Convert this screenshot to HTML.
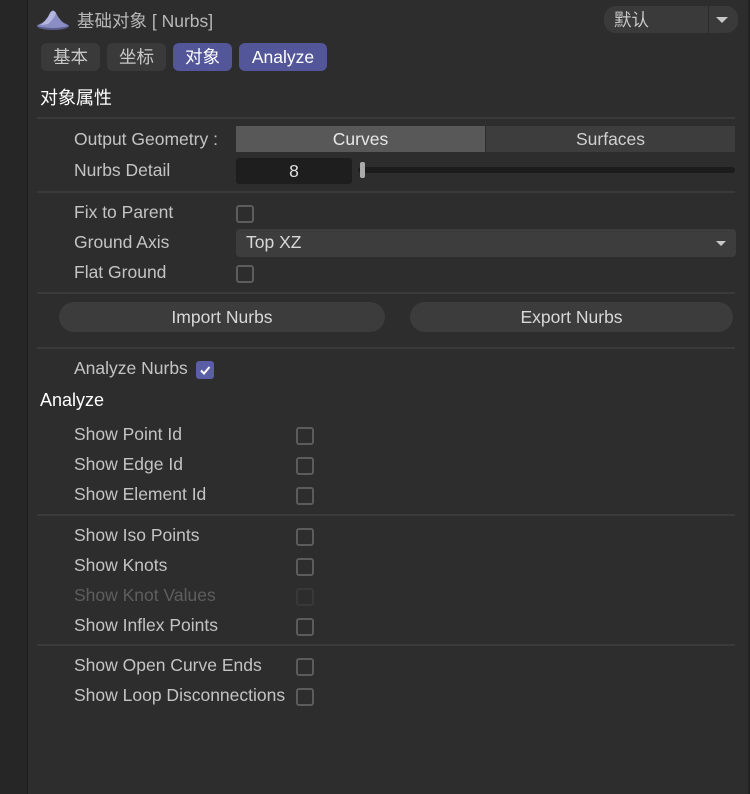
<!DOCTYPE html>
<html><head><meta charset="utf-8"><style>
body{margin:0;width:750px;height:794px;background:#2d2d2d;position:relative;overflow:hidden;font-family:"Liberation Sans","Noto Sans CJK SC",sans-serif;color:#c4c4c4;font-size:17.5px}
.a{position:absolute;white-space:nowrap}
.sep{position:absolute;left:37px;width:698px;height:2px;background:#3a3a3a}
.cb{position:absolute;width:14px;height:14px;border:2px solid #5c5c5c;border-radius:3px}
.tab{position:absolute;top:43px;height:28px;border-radius:6px;background:#3a3a3a;color:#c8c8c8;text-align:center;line-height:28px;font-size:17.5px}
.tab.on{background:#53579a;color:#fff}
.btn{position:absolute;top:302px;height:30px;border-radius:15px;background:#3c3c3c;color:#d8d8d8;text-align:center;line-height:30px}
</style></head><body>
<div class="a" style="left:0;top:0;width:27px;height:794px;background:#262626;border-right:1px solid #1c1c1c"></div>
<div class="a" style="left:748px;top:0;width:2px;height:794px;background:#222"></div>
<svg class="a" style="left:36px;top:9px" width="34" height="22" viewBox="0 0 34 22"><ellipse cx="17" cy="17" rx="16" ry="4" fill="#5a5c8a"/><path d="M1 17 Q10 13 14 4 Q17 -1 20 4 Q24 13 33 17 Q17 21 1 17Z" fill="#8a8cc4"/><path d="M14 4 Q17 0 20 4 Q18 10 12 15 Q8 16 4 16 Q11 12 14 4Z" fill="#b4b6e0"/></svg>
<div class="a" style="left:77px;top:8px;color:#b8b8b8">基础对象 [ Nurbs]</div>
<div class="a" style="left:604px;top:6px;width:134px;height:27px;border-radius:12px;background:#3a3a3a"></div>
<div class="a" style="left:708px;top:6px;width:1px;height:27px;background:#2a2a2a"></div>
<div class="a" style="left:614px;top:7px;color:#c8c8c8">默认</div>
<div class="a" style="left:716px;top:17px;width:0;height:0;border-left:6px solid transparent;border-right:6px solid transparent;border-top:6px solid #c8c8c8"></div>
<div class="tab" style="left:41px;width:59px">基本</div>
<div class="tab" style="left:107px;width:59px">坐标</div>
<div class="tab on" style="left:173px;width:59px">对象</div>
<div class="tab on" style="left:239px;width:88px">Analyze</div>
<div class="a" style="left:40px;top:84px;color:#fff;font-size:18px">对象属性</div>
<div class="sep" style="top:117px"></div>
<div class="a" style="left:74px;top:129px">Output Geometry :</div>
<div class="a" style="left:236px;top:126px;width:249px;height:26px;background:#585858;text-align:center;line-height:26px;color:#e8e8e8">Curves</div>
<div class="a" style="left:486px;top:126px;width:249px;height:26px;background:#3d3d3d;text-align:center;line-height:26px;color:#d0d0d0">Surfaces</div>
<div class="a" style="left:74px;top:160px">Nurbs Detail</div>
<div class="a" style="left:236px;top:158px;width:116px;height:26px;background:#1e1e1e;border-radius:3px;text-align:center;line-height:26px;color:#e0e0e0">8</div>
<div class="a" style="left:358px;top:167px;width:377px;height:6px;background:#1c1c1c;border-radius:3px"></div>
<div class="a" style="left:360px;top:162px;width:5px;height:16px;background:#aaa;border-radius:2px"></div>
<div class="sep" style="top:191px"></div>
<div class="a" style="left:74px;top:202px">Fix to Parent</div>
<div class="cb" style="left:236px;top:205px"></div>
<div class="a" style="left:74px;top:232px">Ground Axis</div>
<div class="a" style="left:236px;top:229px;width:500px;height:28px;border-radius:4px;background:#3d3d3d"></div>
<div class="a" style="left:246px;top:232px;color:#d8d8d8">Top XZ</div>
<div class="a" style="left:716px;top:241px;width:0;height:0;border-left:5px solid transparent;border-right:5px solid transparent;border-top:5px solid #c8c8c8"></div>
<div class="a" style="left:74px;top:262px">Flat Ground</div>
<div class="cb" style="left:236px;top:265px"></div>
<div class="sep" style="top:292px"></div>
<div class="btn" style="left:59px;width:326px">Import Nurbs</div>
<div class="btn" style="left:410px;width:323px">Export Nurbs</div>
<div class="sep" style="top:347px"></div>
<div class="a" style="left:74px;top:358px">Analyze Nurbs</div>
<div class="a" style="left:196px;top:361px;width:18px;height:18px;border-radius:3px;background:#5a5ea6"></div>
<svg class="a" style="left:198px;top:363px" width="14" height="14"><path d="M3 7.5 L6 10.5 L11.5 4" stroke="#fff" stroke-width="2" fill="none"/></svg>
<div class="a" style="left:40px;top:390px;color:#fff;font-size:18px">Analyze</div>
<div class="a" style="left:74px;top:424px">Show Point Id</div><div class="cb" style="left:296px;top:427px"></div>
<div class="a" style="left:74px;top:454px">Show Edge Id</div><div class="cb" style="left:296px;top:457px"></div>
<div class="a" style="left:74px;top:484px">Show Element Id</div><div class="cb" style="left:296px;top:487px"></div>
<div class="sep" style="top:514px"></div>
<div class="a" style="left:74px;top:525px">Show Iso Points</div><div class="cb" style="left:296px;top:528px"></div>
<div class="a" style="left:74px;top:555px">Show Knots</div><div class="cb" style="left:296px;top:558px"></div>
<div class="a" style="left:74px;top:585px;color:#5e5e5e">Show Knot Values</div><div class="cb" style="left:296px;top:588px;border-color:#383838"></div>
<div class="a" style="left:74px;top:615px">Show Inflex Points</div><div class="cb" style="left:296px;top:618px"></div>
<div class="sep" style="top:644px"></div>
<div class="a" style="left:74px;top:655px">Show Open Curve Ends</div><div class="cb" style="left:296px;top:658px"></div>
<div class="a" style="left:74px;top:685px">Show Loop Disconnections</div><div class="cb" style="left:296px;top:688px"></div>
</body></html>
